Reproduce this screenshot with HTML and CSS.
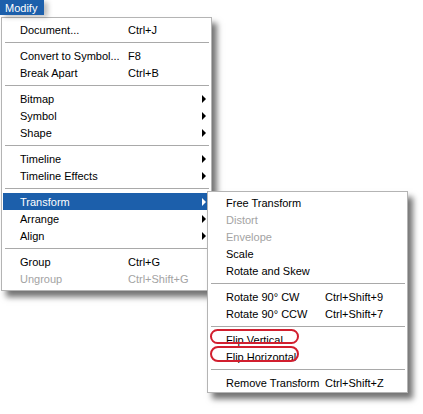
FILE: index.html
```html
<!DOCTYPE html>
<html>
<head>
<meta charset="utf-8">
<link rel="stylesheet" href="styles.css">
</head>
<body>
<div class="tab">Modify</div>
<div class="menu main">
  <div class="item"><span class="label">Document...</span><span class="key">Ctrl+J</span></div>
  <div class="sep"></div>
  <div class="item"><span class="label">Convert to Symbol...</span><span class="key">F8</span></div>
  <div class="item"><span class="label">Break Apart</span><span class="key">Ctrl+B</span></div>
  <div class="sep"></div>
  <div class="item"><span class="label">Bitmap</span><span class="key"></span><span class="arrow"></span></div>
  <div class="item"><span class="label">Symbol</span><span class="key"></span><span class="arrow"></span></div>
  <div class="item"><span class="label">Shape</span><span class="key"></span><span class="arrow"></span></div>
  <div class="sep"></div>
  <div class="item"><span class="label">Timeline</span><span class="key"></span><span class="arrow"></span></div>
  <div class="item"><span class="label">Timeline Effects</span><span class="key"></span><span class="arrow"></span></div>
  <div class="sep"></div>
  <div class="item active"><span class="label">Transform</span><span class="key"></span><span class="arrow"></span></div>
  <div class="item"><span class="label">Arrange</span><span class="key"></span><span class="arrow"></span></div>
  <div class="item"><span class="label">Align</span><span class="key"></span><span class="arrow"></span></div>
  <div class="sep"></div>
  <div class="item"><span class="label">Group</span><span class="key">Ctrl+G</span></div>
  <div class="item disabled"><span class="label">Ungroup</span><span class="key">Ctrl+Shift+G</span></div>
</div>
<div class="menu sub">
  <div class="item"><span class="label">Free Transform</span><span class="key"></span></div>
  <div class="item disabled"><span class="label">Distort</span><span class="key"></span></div>
  <div class="item disabled"><span class="label">Envelope</span><span class="key"></span></div>
  <div class="item"><span class="label">Scale</span><span class="key"></span></div>
  <div class="item"><span class="label">Rotate and Skew</span><span class="key"></span></div>
  <div class="sep"></div>
  <div class="item"><span class="label">Rotate 90° CW</span><span class="key">Ctrl+Shift+9</span></div>
  <div class="item"><span class="label">Rotate 90° CCW</span><span class="key">Ctrl+Shift+7</span></div>
  <div class="sep"></div>
  <div class="item circled c1"><span class="label">Flip Vertical</span><span class="key"></span></div>
  <div class="item circled c2"><span class="label">Flip Horizontal</span><span class="key"></span></div>
  <div class="sep"></div>
  <div class="item"><span class="label">Remove Transform</span><span class="key">Ctrl+Shift+Z</span></div>
</div>
</body>
</html>
```

FILE: styles.css
```css
html, body {
  margin: 0;
  padding: 0;
  background: #ffffff;
}
body {
  font-family: "Liberation Sans", Arial, sans-serif;
  font-size: 11px;
  color: #000;
  position: relative;
  width: 423px;
  height: 414px;
  overflow: hidden;
}
.tab {
  display: inline-block;
  background: #1c5fab;
  color: #fff;
  height: 15px;
  line-height: 16px;
  padding: 0 7px 0 5px;
  box-shadow: 4px 2px 5px rgba(0,0,0,0.25);
  position: relative;
  z-index: 1;
}
.menu {
  background: #fff;
  border: 1px solid #b4b4b4;
  box-sizing: border-box;
}
.main {
  margin: 2px 0 0 1px;
  width: 211px;
  padding: 3px 0 3px 0;
  box-shadow: 5px 6px 6px rgba(0,0,0,0.55);
}
.sub {
  position: absolute;
  left: 207px;
  top: 191px;
  width: 201px;
  padding: 2px 0 1px 0;
  box-shadow: 5px 6px 6px rgba(0,0,0,0.55);
  z-index: 2;
}
.item {
  display: flex;
  align-items: center;
  height: 17px;
  margin: 0 3px 0 1px;
  padding-left: 17px;
  position: relative;
}
.main .label { width: 108px; }
.sub .label { width: 99px; }
.main .key { flex: 1; }
.disabled { color: #a3a3a3; }
.active {
  background: #1c5fab;
  color: #fff;
}
.arrow {
  width: 0;
  height: 0;
  border-top: 4px solid transparent;
  border-bottom: 4px solid transparent;
  border-left: 4px solid #000;
  margin-right: 2px;
}
.active .arrow { border-left-color: #fff; }
.sep {
  height: 1px;
  background: #a9a9a9;
  margin: 4px 2px 4px 3px;
}
.circled::after {
  content: "";
  position: absolute;
  left: 1px;
  width: 85px;
  border: 2px solid #d21f2f;
  border-radius: 8px;
}
.c1::after { top: -2px; height: 11px; }
.c2::after { top: -2px; height: 12px; }
```
